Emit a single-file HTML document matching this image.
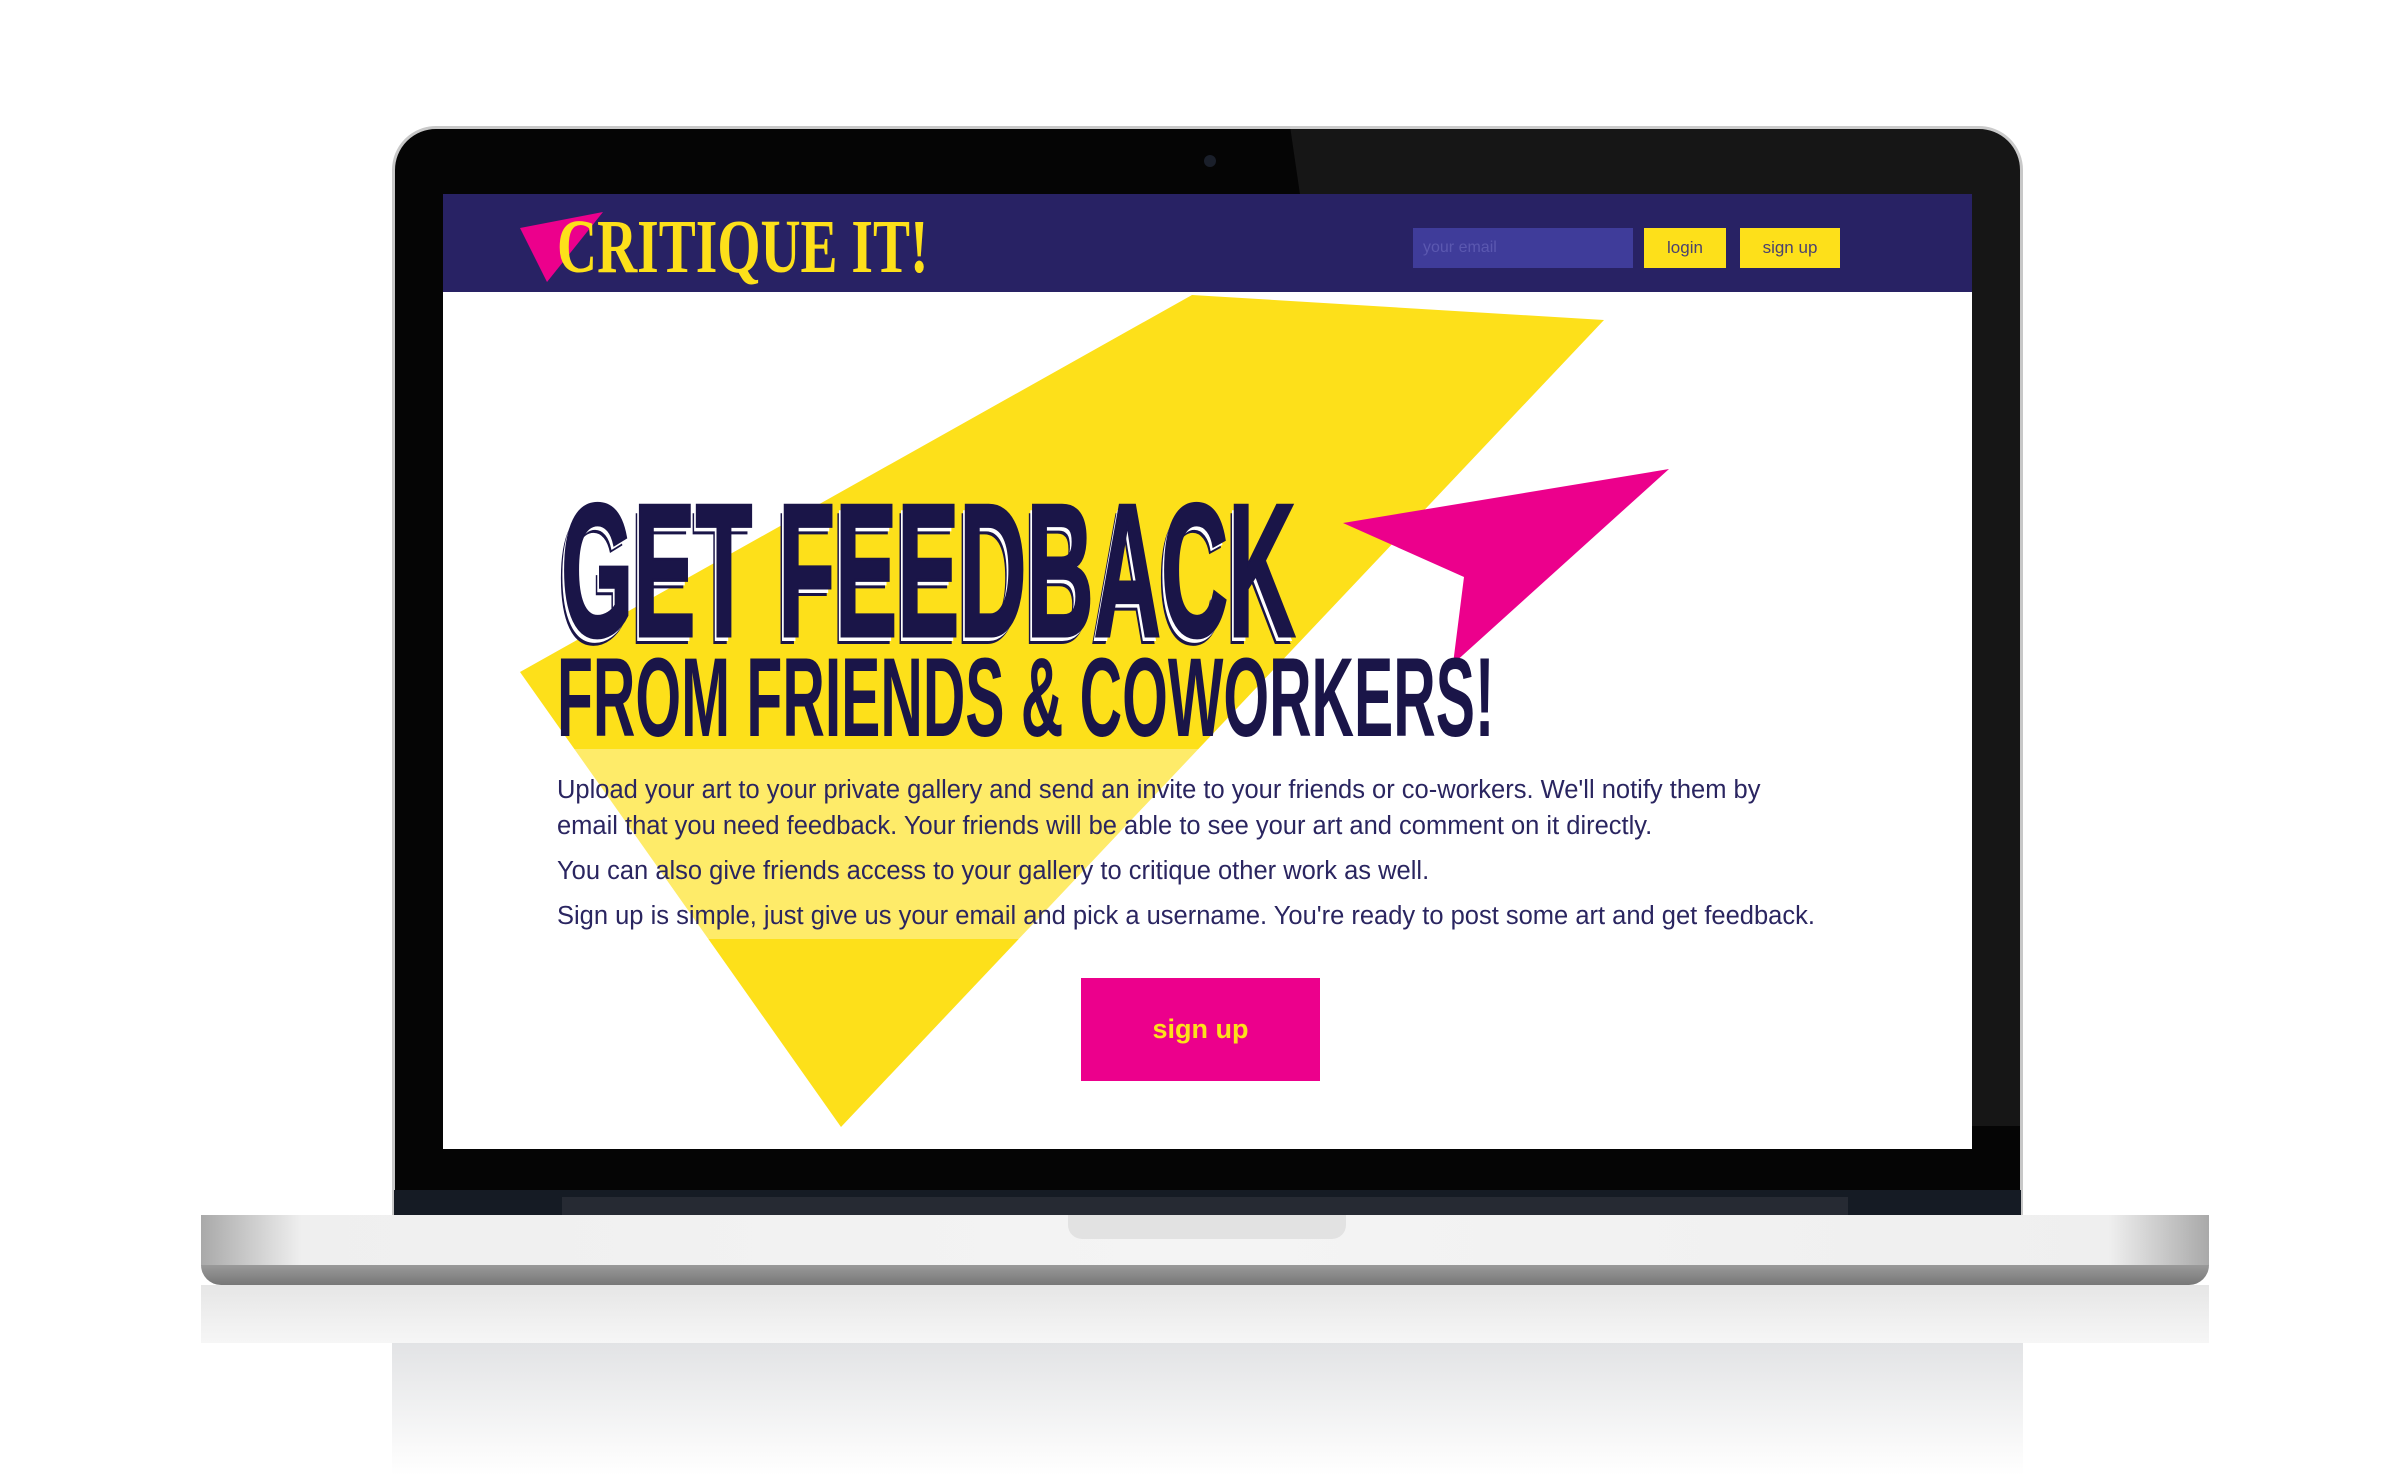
<!DOCTYPE html>
<html><head><meta charset="utf-8"><style>
html,body{margin:0;padding:0;background:#fff;}
body{width:2400px;height:1476px;position:relative;overflow:hidden;font-family:"Liberation Sans",sans-serif;}
.abs{position:absolute;}
.lid{left:392px;top:126px;width:1631px;height:1095px;background:#050505;border-radius:44px 44px 0 0;border:3px solid #c8c8c8;box-sizing:border-box;}
.screen{left:443px;top:194px;width:1529px;height:955px;background:#fff;overflow:hidden;}
.hdr{left:0;top:0;width:1529px;height:98px;background:#282264;}
.cond{transform-origin:0 0;white-space:nowrap;font-weight:bold;}
p{margin:0}
</style></head><body>
<div class="abs" style="left:201px;top:1285px;width:2008px;height:58px;background:linear-gradient(#e6e6e6,#f6f6f6);"></div>
<div class="abs" style="left:392px;top:1343px;width:1631px;height:133px;background:linear-gradient(#e2e3e5,#fafafa 80%,#fff);"></div>
<div class="abs lid"></div>
<div class="abs" style="left:1290px;top:126px;width:730px;height:1000px;background:rgba(255,255,255,0.07);clip-path:polygon(0 0,100% 0,100% 100%,20% 100%);"></div>
<div class="abs" style="left:1204px;top:155px;width:12px;height:12px;border-radius:50%;background:#1a1f2a;"></div>
<div class="abs" style="left:394px;top:1190px;width:1627px;height:27px;background:#151b24;"></div>
<div class="abs" style="left:562px;top:1197px;width:1286px;height:20px;background:#262a33;"></div>
<div class="abs screen">
  <div class="abs hdr"></div>
  <svg class="abs" style="left:0;top:0" width="1529" height="955">
    <polygon points="77,34 160,18 104,88" fill="#ec008c"/>
    <polygon points="77,478 749,101 1161,126 398,933" fill="#fde01a"/>
    <polygon points="900,329 1226,275 1010,470 1021,383" fill="#ec008c"/>
  </svg>
  <div class="abs" style="left:114px;top:10px;color:#fde01a;font-family:'Liberation Serif',serif;font-size:76px;font-weight:bold;"><span class="cond" style="display:inline-block;transform:scaleX(0.73);">CRITIQUE IT!</span></div>
  <div class="abs" style="left:970px;top:34px;width:220px;height:40px;background:#3f3c9a;color:#5b58b0;font-size:16px;line-height:40px;padding-left:10px;box-sizing:border-box;">your email</div>
  <div class="abs" style="left:1201px;top:34px;width:82px;height:40px;background:#fde01a;color:#4a4270;font-size:17px;line-height:40px;text-align:center;">login</div>
  <div class="abs" style="left:1297px;top:34px;width:100px;height:40px;background:#fde01a;color:#4a4270;font-size:17px;line-height:40px;text-align:center;">sign up</div>
  <div class="abs" style="left:114px;top:555px;width:1300px;height:190px;background:rgba(255,255,255,0.35);"></div>
  <div class="abs cond" style="left:118px;top:282px;font-size:190px;line-height:190px;color:#1a1548;transform:scaleX(0.49);-webkit-text-stroke:3px #1a1548;text-shadow:-5px 5px 0 #fff,-8px 8px 0 #1a1548;">GET FEEDBACK</div>
  <div class="abs cond" style="left:114px;top:448px;font-size:112px;line-height:112px;color:#1a1548;transform:scaleX(0.525);">FROM FRIENDS &amp; COWORKERS!</div>
  <div class="abs" style="left:114px;top:578px;width:1300px;color:#2a2560;font-size:25.5px;line-height:36px;">
    <p>Upload your art to your private gallery and send an invite to your friends or co-workers. We'll notify them by<br>email that you need feedback. Your friends will be able to see your art and comment on it directly.</p>
    <p style="margin-top:9px">You can also give friends access to your gallery to critique other work as well.</p>
    <p style="margin-top:9px">Sign up is simple, just give us your email and pick a username. You're ready to post some art and get feedback.</p>
  </div>
  <div class="abs" style="left:638px;top:784px;width:239px;height:103px;background:#ec008c;color:#fde01a;font-weight:bold;font-size:27px;line-height:103px;text-align:center;">sign up</div>
</div>
<div class="abs" style="left:201px;top:1215px;width:2008px;height:50px;background:linear-gradient(90deg,#a9a9a9,#efefef 5%,#f4f4f4 50%,#efefef 95%,#a9a9a9);"></div>
<div class="abs" style="left:1068px;top:1215px;width:278px;height:24px;background:#e2e2e2;border-radius:0 0 14px 14px;"></div>
<div class="abs" style="left:201px;top:1265px;width:2008px;height:20px;background:linear-gradient(#9a9a9a,#777);border-radius:0 0 60px 60px;"></div>
</body></html>
